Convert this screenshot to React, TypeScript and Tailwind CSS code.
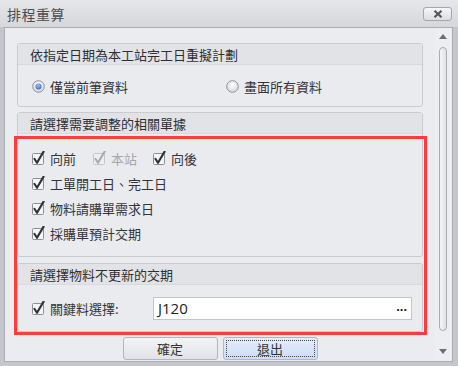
const font = "font-['Noto_Sans_CJK_TC','Noto_Sans_CJK_JP',sans-serif]";

function CheckBox({ disabled = false }: { disabled?: boolean }) {
  const border = disabled ? "#c4c6ca" : "#8c8f95";
  const mark = disabled ? "#a9abb0" : "#2f3136";
  return (
    <svg width="15" height="15" viewBox="0 0 15 15" className="shrink-0">
      <rect x="0.5" y="2.5" width="11" height="11" rx="1" fill={disabled ? "#eeeff1" : "#f4f5f7"} stroke={border} />
      <path d="M2.4 7.8 L5 11.8 L11.6 0.6" fill="none" stroke={mark} strokeWidth="2.1" strokeLinecap="round" strokeLinejoin="round" />
    </svg>
  );
}

function Radio({ checked = false }: { checked?: boolean }) {
  return (
    <svg width="13" height="13" viewBox="0 0 13 13" className="shrink-0">
      <defs>
        <radialGradient id="rbg" cx="50%" cy="35%" r="65%">
          <stop offset="0%" stopColor="#ffffff" />
          <stop offset="100%" stopColor="#d3d5d9" />
        </radialGradient>
        <radialGradient id="rdot" cx="45%" cy="35%" r="70%">
          <stop offset="0%" stopColor="#9ec3f5" />
          <stop offset="100%" stopColor="#2d63c8" />
        </radialGradient>
      </defs>
      <circle cx="6.5" cy="6.5" r="5.8" fill="url(#rbg)" stroke="#8f9298" />
      {checked && <circle cx="6.5" cy="6.5" r="3" fill="url(#rdot)" />}
    </svg>
  );
}

function GroupHeader({ children }: { children: React.ReactNode }) {
  return (
    <div className="h-[21px] flex items-center pl-[12px] bg-[#e2e3e7] border-b border-[#d9dadf] rounded-t-[3px] text-[13px] leading-none text-[#2f2f33]">
      {children}
    </div>
  );
}

function CheckRow({ label }: { label: string }) {
  return (
    <div className="h-[25px] flex items-center gap-[3px]">
      <CheckBox />
      <span>{label}</span>
    </div>
  );
}

export default function App() {
  return (
    <div className={`${font} relative w-[458px] h-[366px] bg-[#c4c6cc] flex flex-col overflow-hidden text-[13px] leading-none text-[#333438]`}>
      {/* Title bar */}
      <div className="h-[27px] shrink-0 flex items-center justify-between pl-[7px] pr-[6px] bg-gradient-to-b from-[#e6e7ea] to-[#d5d7db]">
        <span className="text-[14px] text-[#4b4c50] tracking-[0.5px]">排程重算</span>
        <button className="w-[29px] h-[14px] mt-[1px] flex items-center justify-center rounded-[3px] border border-[#a3a6ac] bg-gradient-to-b from-[#f5f6f7] to-[#dcdee2]">
          <svg width="10" height="8" viewBox="0 0 10 8">
            <path d="M1.5 0.8 L8.5 7.2 M8.5 0.8 L1.5 7.2" stroke="#55575c" strokeWidth="2.2" />
          </svg>
        </button>
      </div>

      {/* Content */}
      <div className="ml-[4px] mr-[5px] h-[335px] shrink-0 flex border border-[#a9acb3] bg-[#ebecf0]">
        <div className="flex-1 flex flex-col pl-[12px] pt-[15px]">
          {/* Group 1 */}
          <div className="w-[406px] h-[64px] flex flex-col border border-[#c9cbd0] rounded-[3px] bg-[#eaebef]">
            <GroupHeader>依指定日期為本工站完工日重擬計劃</GroupHeader>
            <div className="flex-1 flex items-center pl-[14px] pt-[1px]">
              <div className="w-[194px] flex items-center gap-[5px]">
                <Radio checked />
                <span>僅當前筆資料</span>
              </div>
              <div className="flex items-center gap-[5px]">
                <Radio />
                <span>畫面所有資料</span>
              </div>
            </div>
          </div>

          {/* Group 2 */}
          <div className="mt-[5px] w-[406px] h-[145px] flex flex-col border border-[#c9cbd0] rounded-[3px] bg-[#eaebef]">
            <GroupHeader>請選擇需要調整的相關單據</GroupHeader>
            <div className="flex-1 flex flex-col pl-[14px] pt-[12px]">
              <div className="h-[25px] flex items-center">
                <div className="w-[61px] flex items-center gap-[3px]">
                  <CheckBox />
                  <span>向前</span>
                </div>
                <div className="w-[60px] flex items-center gap-[3px] text-[#a4a6ab]">
                  <CheckBox disabled />
                  <span>本站</span>
                </div>
                <div className="flex items-center gap-[3px]">
                  <CheckBox />
                  <span>向後</span>
                </div>
              </div>
              <CheckRow label="工單開工日、完工日" />
              <CheckRow label="物料請購單需求日" />
              <CheckRow label="採購單預計交期" />
            </div>
          </div>

          {/* Group 3 */}
          <div className="mt-[6px] w-[406px] h-[69px] flex flex-col border border-[#c9cbd0] rounded-[3px] bg-[#eaebef]">
            <GroupHeader>請選擇物料不更新的交期</GroupHeader>
            <div className="flex-1 flex items-center pl-[14px] pt-[1px]">
              <div className="w-[121px] flex items-center gap-[3px]">
                <CheckBox />
                <span>關鍵料選擇:</span>
              </div>
              <div className="w-[259px] h-[23px] flex items-center justify-between bg-white border border-[#c3c5ca] pl-[4px] pr-[4px]">
                <span className="font-['Open_Sans',sans-serif] text-[15px] text-[#222]">J120</span>
                <span className="font-['Liberation_Sans',sans-serif] text-[13px] font-bold text-[#222] -mt-[4px]">...</span>
              </div>
            </div>
          </div>

          {/* Buttons */}
          <div className="mt-[5px] w-[406px] flex justify-center gap-[5px]">
            <button className="w-[95px] h-[23px] flex items-center justify-center rounded-[3px] border border-[#b3b6bc] bg-gradient-to-b from-[#f3f4f6] to-[#e0e2e6] text-[13px] text-[#333]">
              確定
            </button>
            <button className="w-[95px] h-[23px] p-[2px] rounded-[3px] border border-[#b3b6bc] bg-gradient-to-b from-[#e4edfc] to-[#cddcf7]">
              <span className="w-full h-full flex items-center justify-center border border-dotted border-[#444] text-[13px] text-[#333]">
                退出
              </span>
            </button>
          </div>
        </div>

        {/* Scrollbar */}
        <div className="w-[16px] shrink-0 mr-[1px] flex flex-col items-center pt-[5px] pb-[5px] bg-[#eceef1]">
          <svg width="8" height="5" viewBox="0 0 8 5" className="mt-[1px]">
            <path d="M0 5 L4 0 L8 5 Z" fill="#6b6e74" />
          </svg>
          <div className="mt-[8px] w-[8px] flex-1 rounded-full border border-[#a9acb2] bg-gradient-to-r from-[#f4f5f7] to-[#dfe1e5]" />
          <svg width="8" height="5" viewBox="0 0 8 5" className="mt-[18px] mb-[2px]">
            <path d="M0 0 L8 0 L4 5 Z" fill="#6b6e74" />
          </svg>
        </div>
      </div>

      {/* Red highlight annotation */}
      <div className="absolute left-[14px] top-[136px] w-[413px] h-[199px] border-[3px] border-[#ff3b3b] pointer-events-none" />
    </div>
  );
}
